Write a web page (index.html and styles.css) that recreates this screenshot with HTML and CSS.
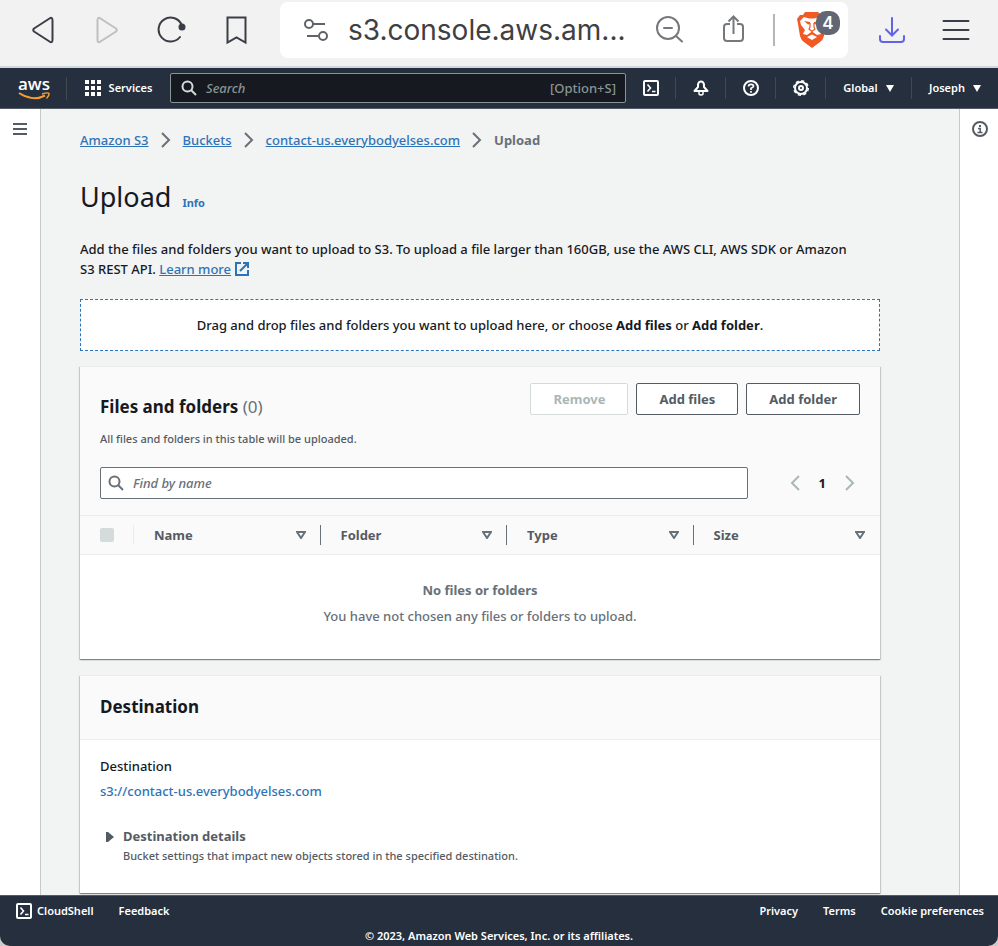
FILE: index.html
```html
<!DOCTYPE html>
<html lang="en">
<head>
<meta charset="utf-8">
<title>Upload - Amazon S3</title>
<link rel="stylesheet" href="styles.css">
</head>
<body>
<div class="browser">
  <div class="browser-nav">
    <button class="icon-btn" aria-label="Back"><svg width="24" height="30" viewBox="0 0 24 30" fill="none" stroke="#3b3e47" stroke-width="2" stroke-linejoin="round"><path d="M18.500 3.500Q21.500 1.500 21.500 5.500V24.500Q21.500 28.500 18.500 26.500L3 16.500Q1.500 15 3 13.500Z"/></svg></button>
    <button class="icon-btn" aria-label="Forward"><svg width="24" height="30" viewBox="0 0 24 30" fill="none" stroke="#bfbfc1" stroke-width="2" stroke-linejoin="round"><path d="M5.500 3.500Q2.500 1.500 2.500 5.500V24.500Q2.500 28.500 5.500 26.500L21 16.500Q22.500 15 21 13.500Z"/></svg></button>
    <button class="icon-btn" aria-label="Reload"><svg width="30" height="30" viewBox="0 0 30 30" fill="none" stroke="#3b3e47" stroke-width="2" stroke-linecap="round"><path d="M23 22A12 12 0 1 1 24.500 9.500"/><circle cx="25" cy="12" r="2.500" fill="#3b3e47"/></svg></button>
    <button class="icon-btn" aria-label="Bookmark"><svg width="24" height="30" viewBox="0 0 24 30" fill="none" stroke="#3b3e47" stroke-width="2"><path d="M2.500 2.500H20.500V27.500L11.500 22.500L2.500 27.500Z"/></svg></button>
  </div>
  <div class="address">
    <button class="icon-btn" aria-label="Site settings"><svg width="26" height="26" viewBox="0 0 26 26" fill="none" stroke="#5f6368" stroke-width="2"><circle cx="6" cy="7" r="4"/><path d="M10 7H22M4 19H15"/><circle cx="20" cy="19" r="4"/></svg></button>
    <span class="url">s3.console.aws.am...</span>
    <button class="icon-btn zoom-btn" aria-label="Zoom"><svg width="30" height="30" viewBox="0 0 30 30" fill="none" stroke="#76787c" stroke-width="2" stroke-linecap="round"><circle cx="13" cy="13" r="11"/><path d="M9 13H17M21 21L27 26.500"/></svg></button>
    <button class="icon-btn share-btn" aria-label="Share"><svg width="24" height="30" viewBox="0 0 24 30" fill="none" stroke="#76787c" stroke-width="2"><path d="M8 9H5Q2 9 2 12V23Q2 26 5 26H18Q21 26 21 23V12Q21 9 18 9H15M11.500 19V1.500M6.500 6.500L11.500 1.500L16.500 6.500"/></svg></button>
    <span class="address-rule"></span>
    <button class="icon-btn shield" aria-label="Brave Shields"><svg width="32" height="38" viewBox="0 0 32 38"><path fill="#f15a24" d="M9 1H22L25 4H28L31 8L30 12L28 25Q27 29 24 31L16 37L8 31Q5 29 4 25L2 13L1 8L4 4H7Z"/><path fill="#fff" d="M4 10L8 6L13 7.500H18L23 6L27 10L27 14L23 19L25 23L21 24L16 20.500L11 24L7 23L9 19L5 14ZM11 26L16 23.500L21 26L16 29Z"/><path fill="#f15a24" d="M8 10L14 11V13L12 13.500ZM24 10L18 11V13L20 13.500Z"/><path fill="none" stroke="#f15a24" stroke-width="1.200" d="M14 12V16L13 18L16 20.500L19 18L18 16V12"/></svg><span class="badge">4</span></button>
  </div>
  <div class="browser-tools">
    <button class="icon-btn" aria-label="Downloads"><svg width="28" height="28" viewBox="0 0 28 28" fill="none" stroke="#6264e8" stroke-width="2" stroke-linecap="round"><path d="M14 2V19M8 13.500L14 19.500L20 13.500M2 20V23Q2 26 5 26H23Q26 26 26 23V20"/></svg></button>
    <button class="icon-btn" aria-label="Menu"><svg width="28" height="28" viewBox="0 0 28 28" stroke="#3b3e47" stroke-width="2" stroke-linecap="round"><path d="M1.500 5H26.500M1.500 14H26.500M1.500 23H26.500"/></svg></button>
  </div>
</div>

<header class="topbar">
  <a class="logo" href="#" aria-label="AWS home"><span class="logo-text">aws</span><svg class="smile" width="32" height="8" viewBox="0 0 32 8" fill="none" stroke="#f79b34"><path stroke-width="2" d="M1 1Q15 10 27 3.500"/><path stroke-width="1.500" d="M24 2Q30 0 31 1.500Q31 4 28.500 6.500"/></svg></a>
  <button class="top-item services"><svg width="16" height="16" viewBox="0 0 16 16" fill="#fff"><path d="M0 0h4v4H0zM6 0h4v4H6zM12 0h4v4h-4zM0 6h4v4H0zM6 6h4v4H6zM12 6h4v4h-4zM0 12h4v4H0zM6 12h4v4H6zM12 12h4v4h-4z"/></svg>Services</button>
  <div class="top-search">
    <svg width="16" height="16" viewBox="0 0 16 16" fill="none" stroke="#d5dbdb" stroke-width="2"><circle cx="6.500" cy="6.500" r="5"/><path d="M10 10L15 15"/></svg>
    <input type="text" aria-label="Search" placeholder="Search"><span class="hint">[Option+S]</span>
  </div>
  <button class="top-item glyph" aria-label="CloudShell"><svg width="16" height="16" viewBox="0 0 16 16" fill="none" stroke="#fff" stroke-width="2"><rect x="1" y="1" width="14" height="14" rx="1"/><path stroke-width="1.600" d="M4.500 4.500L7.500 8L4.500 11.500M9 11.500H12.500"/></svg></button>
  <button class="top-item glyph" aria-label="Notifications"><svg width="16" height="16" viewBox="0 0 16 16" fill="none" stroke="#fff" stroke-width="2" stroke-linejoin="round"><path d="M8 1.500Q5.500 1.500 5 4.500V7L1.500 11H14.500L11 7V4.500Q10.500 1.500 8 1.500Z"/><path d="M6 11.500V13.500Q6 15 8 15T10 13.500V11.500" stroke-width="1.500"/></svg></button>
  <button class="top-item glyph" aria-label="Help"><svg width="16" height="16" viewBox="0 0 16 16" fill="none" stroke="#fff"><circle cx="8" cy="8" r="7" stroke-width="2"/><path stroke-width="1.700" d="M5.500 6.500Q5.500 4.300 8 4.300T10.500 6.300Q10.500 7.500 8 8.300V10M8 11V12.700"/></svg></button>
  <button class="top-item glyph" aria-label="Settings"><svg width="16" height="16" viewBox="0 0 16 16" fill="none" stroke="#fff"><circle cx="8" cy="8" r="6" stroke-width="2"/><circle cx="8" cy="8" r="7.300" stroke-width="1.400" stroke-dasharray="3.200 2.533"/><circle cx="8" cy="8" r="2" stroke-width="2"/></svg></button>
  <button class="top-item region">Global<svg width="8" height="7" viewBox="0 0 8 7" fill="#fff"><path d="M0 0H8L4 7Z"/></svg></button>
  <button class="top-item account">Joseph<svg width="8" height="7" viewBox="0 0 8 7" fill="#fff"><path d="M0 0H8L4 7Z"/></svg></button>
</header>

<div class="workspace">
  <aside class="rail"><button class="icon-btn" aria-label="Open navigation"><svg width="14" height="12" viewBox="0 0 14 12" stroke="#545b64" stroke-width="2"><path d="M0 1H14M0 6H14M0 11H14"/></svg></button></aside>
  <main class="content">
    <nav class="crumbs" aria-label="Breadcrumb">
      <a href="#">Amazon S3</a><svg width="10" height="16" viewBox="0 0 10 16" class="chev"><path d="M1 1L8 8L1 15"/></svg>
      <a href="#">Buckets</a><svg width="10" height="16" viewBox="0 0 10 16" class="chev"><path d="M1 1L8 8L1 15"/></svg>
      <a href="#">contact-us.everybodyelses.com</a><svg width="10" height="16" viewBox="0 0 10 16" class="chev"><path d="M1 1L8 8L1 15"/></svg>
      <span class="current">Upload</span>
    </nav>
    <div class="title"><h1>Upload</h1><a href="#">Info</a></div>
    <p class="intro">Add the files and folders you want to upload to S3. To upload a file larger than 160GB, use the AWS CLI, AWS SDK or Amazon S3 REST API. <a href="#">Learn more<svg width="14" height="14" viewBox="0 0 14 14" fill="none" stroke="#2e73b8" stroke-width="2"><path d="M6 1H1V13H13V8M8 1H13V6M13 1L5 9"/></svg></a></p>
    <div class="dropzone">Drag and drop files and folders you want to upload here, or choose <b>Add files</b> or <b>Add folder</b>.</div>

    <section class="card">
      <div class="files-head">
        <div class="files-title">
          <div><h2>Files and folders <span>(0)</span></h2><p class="small">All files and folders in this table will be uploaded.</p></div>
          <div class="actions"><button class="btn" disabled>Remove</button><button class="btn">Add files</button><button class="btn">Add folder</button></div>
        </div>
        <div class="filter">
          <div class="find"><svg width="16" height="16" viewBox="0 0 16 16" fill="none" stroke="#687078" stroke-width="2"><circle cx="6.500" cy="6.500" r="5"/><path d="M10 10L15 15"/></svg><input type="text" aria-label="Find by name" placeholder="Find by name"></div>
          <div class="pager">
            <button class="icon-btn" aria-label="Previous page" disabled><svg width="10" height="16" viewBox="0 0 10 16"><path d="M9 1L2 8L9 15"/></svg></button>
            <b>1</b>
            <button class="icon-btn" aria-label="Next page" disabled><svg width="10" height="16" viewBox="0 0 10 16"><path d="M1 1L8 8L1 15"/></svg></button>
          </div>
        </div>
      </div>
      <table>
        <thead><tr>
          <th class="pick"><div><input type="checkbox" aria-label="Select all" disabled></div></th>
          <th><div>Name<svg width="10" height="8" viewBox="0 0 10 8"><path d="M1 1H9L5 7Z"/></svg></div></th>
          <th><div>Folder<svg width="10" height="8" viewBox="0 0 10 8"><path d="M1 1H9L5 7Z"/></svg></div></th>
          <th><div>Type<svg width="10" height="8" viewBox="0 0 10 8"><path d="M1 1H9L5 7Z"/></svg></div></th>
          <th><div>Size<svg width="10" height="8" viewBox="0 0 10 8"><path d="M1 1H9L5 7Z"/></svg></div></th>
        </tr></thead>
        <tbody><tr><td colspan="5"><b>No files or folders</b><p>You have not chosen any files or folders to upload.</p></td></tr></tbody>
      </table>
    </section>

    <section class="card">
      <div class="card-head"><h2>Destination</h2></div>
      <div class="card-body">
        <div>Destination</div>
        <a class="dest-link" href="#">s3://contact-us.everybodyelses.com</a>
        <button class="expander"><svg width="8" height="10" viewBox="0 0 8 10" fill="#545b64"><path d="M0 0H2L8 5L2 10H0Z"/></svg><span><b>Destination details</b><span class="small">Bucket settings that impact new objects stored in the specified destination.</span></span></button>
      </div>
    </section>
  </main>
  <aside class="rail rail-right"><button class="icon-btn" aria-label="Open info panel"><svg width="16" height="16" viewBox="0 0 16 16" fill="none" stroke="#545b64"><circle cx="8" cy="8" r="7" stroke-width="2"/><path stroke-width="2" d="M8 4V6"/><path stroke-width="1.500" d="M6 7.500H8.200V11.500M5.500 11.500H10.500"/></svg></button></aside>
</div>

<footer class="footer">
  <div class="footer-links">
    <a href="#"><svg width="16" height="16" viewBox="0 0 16 16" fill="none" stroke="#fff" stroke-width="2"><rect x="1" y="1" width="14" height="14" rx="1"/><path stroke-width="1.600" d="M4.500 4.500L7.500 8L4.500 11.500M9 11.500H12.500"/></svg>CloudShell</a>
    <a href="#">Feedback</a>
    <a class="push" href="#">Privacy</a><a href="#">Terms</a><a href="#">Cookie preferences</a>
  </div>
  <div class="copyright">© 2023, Amazon Web Services, Inc. or its affiliates.</div>
</footer>
</body>
</html>
```
FILE: styles.css
```css
* { box-sizing: border-box; }
body {
  margin: 0;
  height: 100vh;
  display: flex;
  flex-direction: column;
  overflow: hidden;
  background: #ccc;
  color: #16191f;
  font: 500 13px/20px "Noto Sans", "Open Sans", sans-serif;
}
h1, h2, p { margin: 0; }
button, input { font: inherit; color: inherit; }
button { border: 0; padding: 0; background: none; }
svg { display: block; flex: none; }
a { color: #2e73b8; }
.icon-btn { display: flex; align-items: center; }

.browser {
  flex: none;
  height: 68px;
  display: flex;
  align-items: flex-start;
  background: #f2f2f2;
  border-bottom: 2px solid #d0d7dd;
}
.browser-nav { width: 280px; height: 60px; display: flex; align-items: center; gap: 40px; padding-left: 31px; }
.browser-nav .icon-btn:nth-child(3) { margin: 0 -2px; }
.address {
  flex: 1;
  height: 56px;
  margin-top: 2px;
  display: flex;
  align-items: center;
  padding: 0 8px 0 23px;
  background: #fff;
  border-radius: 8px;
}
.url { flex: 1; margin-left: 19px; color: #3f4043; font: 28px/36px Inter, sans-serif; white-space: nowrap; }
.share-btn { margin-left: 37px; }
.address-rule { width: 2px; height: 32px; margin: 0 21px 0 27px; background: #b5b5b5; }
.shield { position: relative; width: 44px; }
.badge {
  position: absolute;
  top: 0;
  right: 0;
  width: 24px;
  height: 24px;
  border-radius: 10px;
  background: #626672;
  color: #fff;
  font: 600 17px/24px Inter, sans-serif;
}
.browser-tools { width: 150px; height: 60px; display: flex; align-items: center; gap: 36px; padding-left: 30px; }

.topbar {
  flex: none;
  height: 41px;
  display: flex;
  align-items: center;
  background: #252f3e;
  border-bottom: 1px solid #545b64;
  color: #fff;
  font-size: 11px;
  font-weight: 600;
}
.logo { width: 67px; padding-left: 18px; color: #fff; text-decoration: none; border-right: 1px solid #414750; }
.logo-text { display: block; font: 600 17px/14px "Open Sans", sans-serif; }
.smile { margin-top: 1px; }
.top-item { height: 22px; display: flex; align-items: center; justify-content: center; gap: 8px; font-weight: 600; }
.services { width: 103px; }
.top-search {
  flex: 1;
  height: 30px;
  display: flex;
  align-items: center;
  gap: 7px;
  padding: 0 9px 0 10px;
  background: #16191f;
  border: 1px solid #879596;
  border-radius: 2px;
  color: #879596;
  font-size: 13px;
  font-weight: 500;
}
input { min-width: 0; border: 0; outline: 0; background: none; }
input::placeholder { color: inherit; font-style: italic; opacity: 1; }
.top-search input { flex: 1; }
.glyph { width: 50px; border-right: 1px solid #414750; }
.region { width: 86px; border-right: 1px solid #414750; }
.account { width: 86px; }

.workspace { flex: 1; min-height: 0; display: flex; background: #f2f3f3; }
.rail { width: 41px; background: #fff; border-right: 1px solid #c4c9c9; }
.rail .icon-btn { margin: 14px 0 0 13px; }
.rail-right { width: 39px; border: 0; border-left: 1px solid #c4c9c9; }
.rail-right .icon-btn { margin: 12px 0 0 12px; }
.content { flex: 1; min-width: 0; padding: 21px 79px 0 39px; overflow: hidden; }
.crumbs { display: flex; align-items: center; gap: 12px; color: #687078; }
.chev { fill: none; stroke: #687078; stroke-width: 2; }
.current { font-weight: 700; }
.title { display: flex; align-items: baseline; gap: 11px; margin-top: 29px; }
h1 { font-size: 27px; line-height: 36px; font-weight: 400; }
.title a { font-size: 11px; font-weight: 700; text-decoration: none; }
.intro { margin-top: 24px; padding-right: 20px; }
.intro svg { display: inline-block; margin-left: 4px; vertical-align: -2px; }
.dropzone { margin-top: 20px; padding: 15px; border: 1px dashed #2e73b8; background: #fff; text-align: center; }
.card {
  margin-top: 15px;
  border-top: 1px solid #eaeded;
  background: #fff;
  box-shadow: 0 1px 1px 0 rgba(0, 28, 36, .3), 1px 1px 1px 0 rgba(0, 28, 36, .15), -1px 1px 1px 0 rgba(0, 28, 36, .15);
}
.card + .card { margin-top: 16px; }
h2 { font-size: 17px; line-height: 24px; font-weight: 700; }
h2 span { color: #687078; font-weight: 400; }
.small { display: block; color: #545b64; font-size: 11px; font-weight: 500; }
.files-head { padding: 16px 20px; background: #fafafa; border-bottom: 1px solid #eaeded; }
.files-title { display: flex; justify-content: space-between; align-items: flex-start; }
.files-title h2 { margin: 12px 0 10px; }
.actions { display: flex; gap: 8px; }
.btn { height: 32px; padding: 0 22px; border: 1px solid #545b64; border-radius: 2px; background: #fff; color: #545b64; font-weight: 700; }
.btn:disabled { border-color: #d5dbdb; color: #aab7b8; }
.filter { display: flex; margin-top: 18px; }
.find { flex: 1; height: 32px; display: flex; align-items: center; gap: 7px; padding: 0 7px; border: 1px solid #687078; border-radius: 2px; background: #fff; color: #687078; }
.find input { flex: 1; }
.pager { width: 112px; display: flex; align-items: center; justify-content: flex-end; gap: 19px; padding-right: 5px; }
.pager svg { fill: none; stroke: #aab7b8; stroke-width: 2; }
table { width: 100%; table-layout: fixed; border-collapse: collapse; }
th { height: 38px; padding: 0; background: #fafafa; text-align: left; color: #545b64; }
th div { height: 20px; padding: 0 14px 0 20px; display: flex; align-items: center; justify-content: space-between; border-right: 1px solid #687078; }
th:last-child div { border: 0; padding-right: 15px; }
th svg { fill: none; stroke: #687078; stroke-width: 2; }
.pick { width: 54px; }
.pick div { border-color: #eaeded; }
.pick input { appearance: none; width: 14px; height: 14px; margin: 0; border-radius: 2px; background: #d5dbdb; }
td { height: 105px; padding: 0 0 7px; border-top: 1px solid #eaeded; text-align: center; color: #687078; }
td b { color: #687078; }
td p { margin-top: 6px; }
.card-head { padding: 19px 20px 20px; background: #fafafa; border-bottom: 1px solid #eaeded; }
.card-body { padding: 16px 20px 27px; }
.dest-link { display: block; margin-top: 5px; text-decoration: none; }
.expander { display: flex; gap: 9px; margin-top: 25px; padding-left: 6px; text-align: left; color: #545b64; }
.expander svg { margin-top: 6px; }
.expander b { display: block; }

.footer { flex: none; height: 51px; background: #252f3e; border-top: 1px solid #545b64; border-radius: 0 0 10px 10px; color: #fff; font-size: 11px; font-weight: 600; }
.footer-links { display: flex; gap: 25px; padding: 5px 14px 0 16px; }
.footer-links a { display: flex; align-items: center; gap: 5px; color: #fff; text-decoration: none; }
.push { margin-left: auto; }
.copyright { margin-top: 5px; text-align: center; }
```
